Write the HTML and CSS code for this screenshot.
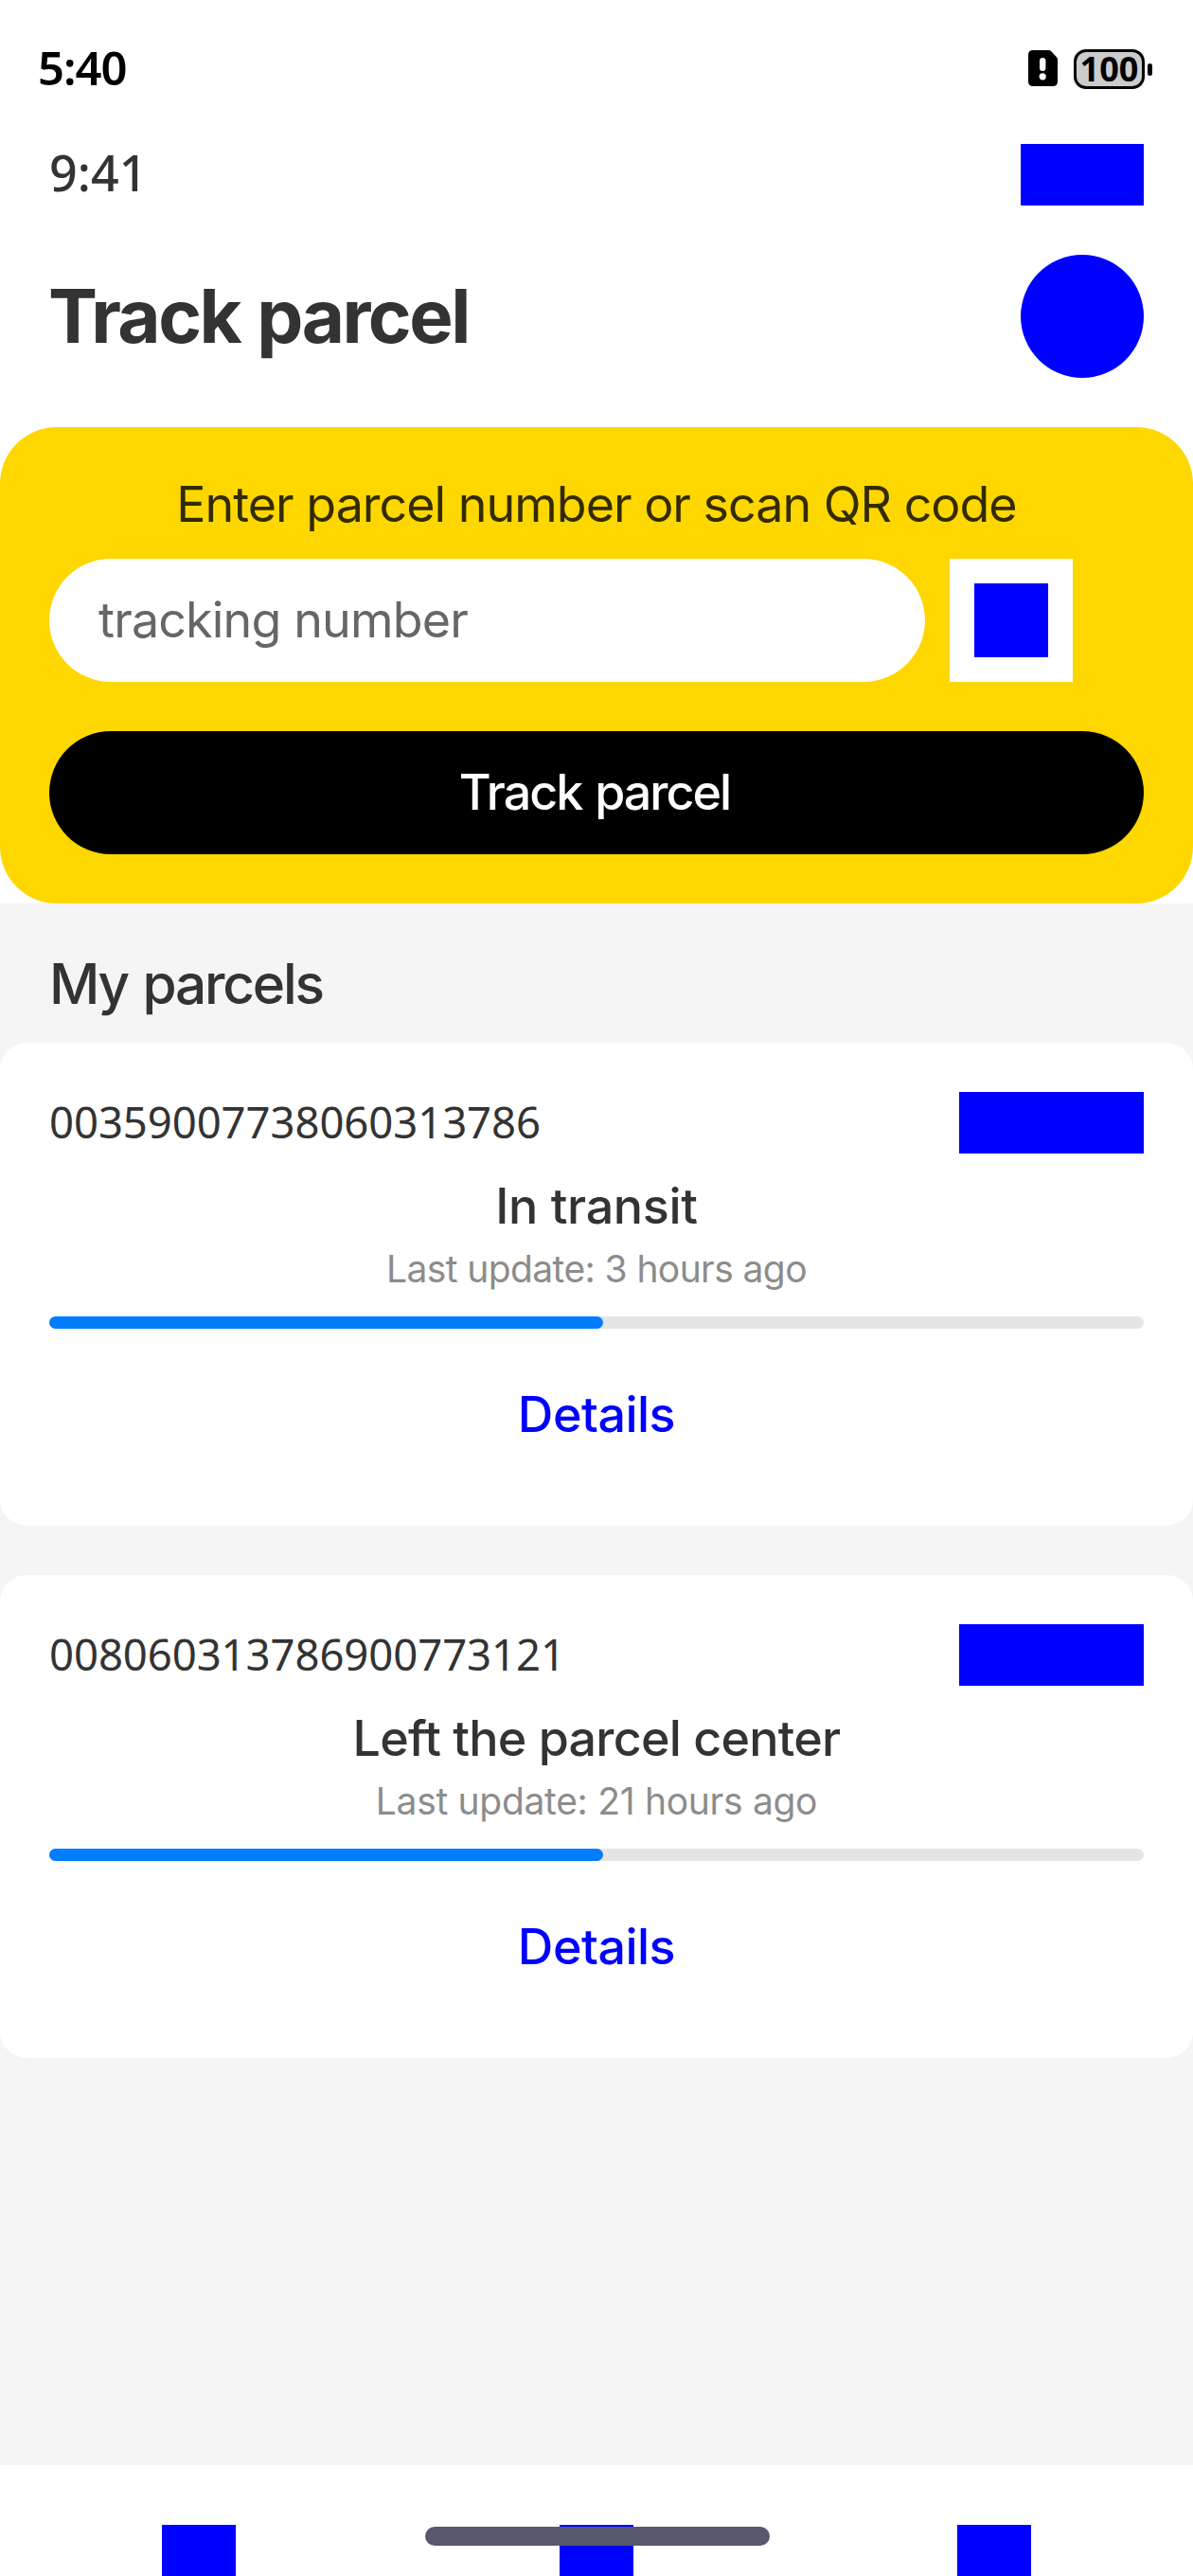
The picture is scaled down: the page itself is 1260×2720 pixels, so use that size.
FILE: index.html
```
<!DOCTYPE html>
<html lang="en">
<head>
<meta charset="utf-8">
<title>Track parcel</title>
<link rel="stylesheet" href="styles.css">
</head>
<body>
<div class="screen">
  <header class="status-bar">
    <span class="status-time">5:40</span>
    <div class="status-icons">
      <svg class="sim-icon" viewBox="0 0 31 38" aria-hidden="true">
        <path fill="#000" d="M5 0H21.500Q23 0 24.100 1.100L29.700 7Q31 8.400 31 10V33Q31 38 26 38H5Q0 38 0 33V5Q0 0 5 0Z"/>
        <rect x="12" y="8" width="6.400" height="14" rx="3.200" fill="#fff"/>
        <circle cx="15.200" cy="27.800" r="3.600" fill="#fff"/>
      </svg>
      <div class="battery"><span class="battery-level">100</span><span class="battery-tip"></span></div>
    </div>
  </header>

  <div class="top">
    <div class="clock-row">
      <span class="clock">9:41</span>
      <span class="signal"></span>
    </div>
    <div class="title-row">
      <h1 class="title">Track parcel</h1>
      <span class="avatar"></span>
    </div>
  </div>

  <section class="search">
    <p class="search-label">Enter parcel number or scan QR code</p>
    <div class="search-row">
      <input class="search-input" type="text" placeholder="tracking number">
      <span class="scan"><span class="scan-icon"></span></span>
    </div>
    <button class="track-button">Track parcel</button>
  </section>

  <main class="parcels">
    <h2 class="parcels-title">My parcels</h2>
    <article class="card">
      <div class="card-head"><span class="number">00359007738060313786</span><span class="carrier"></span></div>
      <p class="state transit">In transit</p>
      <p class="updated">Last update: 3 hours ago</p>
      <div class="track"><div class="bar"></div></div>
      <a class="details">Details</a>
    </article>
    <article class="card">
      <div class="card-head"><span class="number">008060313786900773121</span><span class="carrier"></span></div>
      <p class="state">Left the parcel center</p>
      <p class="updated yesterday">Last update: 21 hours ago</p>
      <div class="track"><div class="bar"></div></div>
      <a class="details">Details</a>
    </article>
  </main>

  <nav class="tabs">
    <span class="tab-icon"></span>
    <span class="tab-icon"></span>
    <span class="tab-icon"></span>
  </nav>
  <div class="home-indicator"></div>
</div>
</body>
</html>
```
FILE: styles.css
```
* { box-sizing: border-box; }

body {
  margin: 0;
  background: #fff;
  color: #333;
  font-family: Inter, "Noto Sans", sans-serif;
}

h1, h2, p { margin: 0; }

.screen {
  position: relative;
  display: flex;
  flex-direction: column;
  width: 1260px;
  height: 2720px;
  overflow: hidden;
}

/* Status bar */
.status-bar {
  display: flex;
  flex: none;
  align-items: center;
  justify-content: space-between;
  height: 152px;
  padding: 0 43px 6px 40px;
}

.status-time {
  padding-bottom: 5px;
  color: #000;
  font: 600 49px/60px "Noto Sans", sans-serif;
  letter-spacing: -1px;
}

.status-icons {
  display: flex;
  align-items: center;
  gap: 17px;
}

.sim-icon {
  width: 31px;
  height: 38px;
  margin-bottom: 2px;
}

.battery {
  display: flex;
  align-items: center;
  gap: 3px;
}

.battery-level {
  width: 75px;
  height: 42px;
  border: 3px solid #000;
  border-radius: 13px;
  background: #ccc;
  color: #000;
  font: 700 36px/35px "Noto Sans", sans-serif;
  text-align: center;
}

.battery-tip {
  width: 5px;
  height: 13px;
  border-radius: 3px;
  background: #000;
}

/* Page header */
.top {
  flex: none;
  height: 299px;
  padding: 0 52px;
}

.clock-row {
  display: flex;
  align-items: flex-start;
  justify-content: space-between;
  height: 65px;
}

.clock {
  font: 500 52px/60px "Noto Sans", sans-serif;
}

.signal {
  width: 130px;
  height: 65px;
  background: #00f;
}

.title-row {
  display: flex;
  align-items: center;
  justify-content: space-between;
  height: 130px;
  margin-top: 52px;
}

.title {
  margin-left: -1px;
  font-size: 78px;
  font-weight: 700;
  line-height: 92px;
  letter-spacing: -2.5px;
  word-spacing: 2px;
}

.avatar {
  width: 130px;
  height: 130px;
  border-radius: 50%;
  background: #00f;
}

/* Search panel */
.search {
  flex: none;
  height: 503px;
  padding: 50px 52px 52px;
  border-radius: 60px;
  background: #ffd700;
}

.search-label {
  color: rgba(0, 0, 0, .8);
  font-size: 52px;
  line-height: 63px;
  letter-spacing: -1px;
  text-align: center;
}

.search-row {
  display: flex;
  gap: 26px;
  margin-top: 26px;
}

.search-input {
  width: 925px;
  height: 130px;
  padding: 0 52px 2px;
  border: 0;
  border-radius: 65px;
  background: #fff;
  font: 400 52px Inter, sans-serif;
  letter-spacing: -.85px;
}

.search-input::placeholder { color: #666; }

.scan {
  display: flex;
  align-items: center;
  justify-content: center;
  width: 130px;
  height: 130px;
  background: #fff;
}

.scan-icon {
  width: 78px;
  height: 78px;
  background: #00f;
}

.track-button {
  display: block;
  width: 100%;
  height: 130px;
  margin-top: 52px;
  padding: 0 4px 2px 0;
  border: 0;
  border-radius: 65px;
  background: #000;
  color: #fff;
  font: 500 52px Inter, sans-serif;
  letter-spacing: -2px;
  word-spacing: 2px;
}

/* Parcel list */
.parcels {
  flex: 1;
  padding-top: 51px;
  background: #f5f5f5;
}

.parcels-title {
  padding: 0 52px;
  margin-bottom: 28px;
  font-size: 58.5px;
  font-weight: 500;
  line-height: 68px;
  letter-spacing: -2.2px;
  word-spacing: 2px;
}

.card {
  display: flex;
  flex-direction: column;
  height: 510px;
  margin-bottom: 52px;
  padding: 52px;
  border-radius: 28px;
  background: #fff;
  text-align: center;
}

.card-head {
  display: flex;
  align-items: center;
  justify-content: space-between;
  height: 65px;
}

.number {
  padding-bottom: 3px;
  font: 400 45.5px/54px "Noto Sans", sans-serif;
  letter-spacing: -.08px;
}

.carrier {
  width: 195px;
  height: 65px;
  background: #00f;
}

.state {
  margin-top: 26px;
  font-size: 52px;
  font-weight: 500;
  line-height: 60px;
  letter-spacing: -.75px;
}

.transit { letter-spacing: -.3px; }

.updated {
  margin-top: 13px;
  color: #8c8c8c;
  font-size: 39px;
  line-height: 46px;
  letter-spacing: -.6px;
}

.yesterday { letter-spacing: -.3px; }

.track {
  height: 13px;
  margin-top: 27px;
  border-radius: 6.5px;
  background: #e5e5e5;
}

.bar {
  width: 584.500px;
  height: 13px;
  border-radius: 6.5px;
  background: #007dff;
}

.details {
  margin-top: 61px;
  color: #00f;
  font-size: 52px;
  font-weight: 500;
  line-height: 60px;
  letter-spacing: -.5px;
}

/* Bottom tabs */
.tabs {
  display: grid;
  flex: none;
  grid-template-columns: repeat(3, 1fr);
  justify-items: center;
  height: 117px;
  padding-top: 63px;
  background: #fff;
}

.tab-icon {
  width: 78px;
  height: 78px;
  background: #00f;
}

.home-indicator {
  position: absolute;
  bottom: 32px;
  left: 449px;
  width: 364px;
  height: 20px;
  border-radius: 10px;
  background: #57586c;
}
```
